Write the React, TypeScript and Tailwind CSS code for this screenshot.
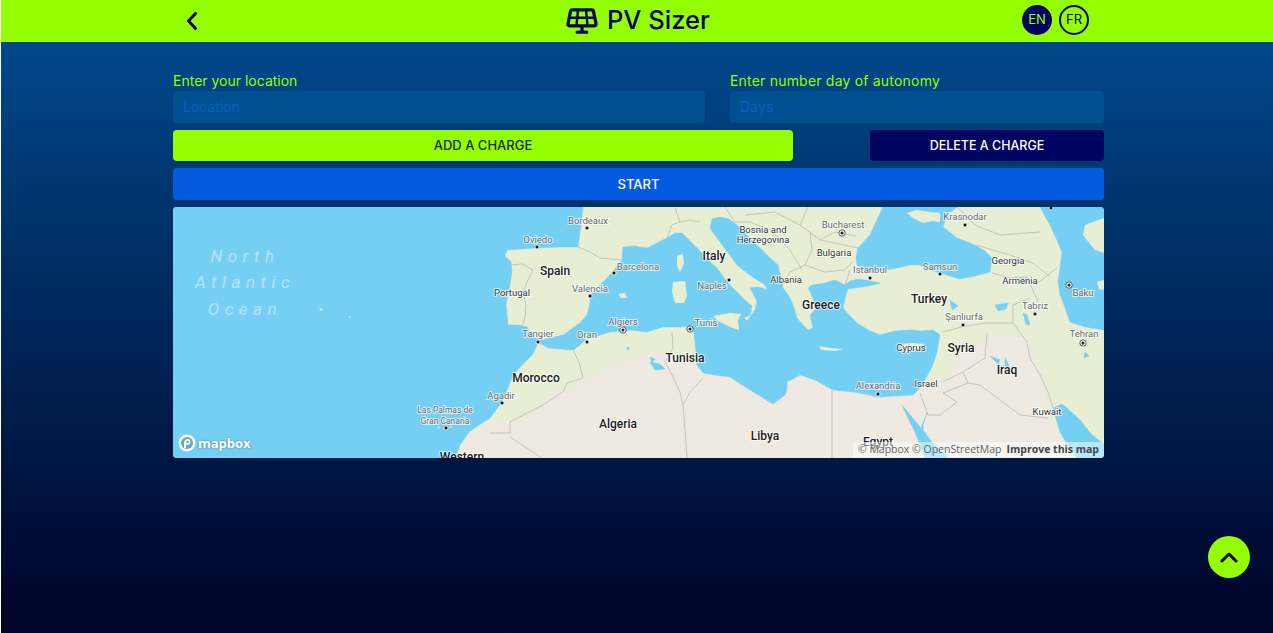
import React from "react";
import { FaSolarPanel } from "react-icons/fa6";

// map drawing uses page coordinates, viewBox is the map's box
const SEA =
  "M173 207 L583 207 L581 225 L578 247 L560 247 L535 248 L507 250 L505 256 L511 262 L512 272 L509 290 L506 304 L508 325 L518 325 L527 327 L533 336 L540 340 L550 338 L563 335 L570 330 L580 323 L587 315 L590 303 L590 295 L598 287 L607 278 L616 268 L622 260 L623 247 L635 246 L647 248 L657 243 L667 238 L675 233 L682 233 L690 241 L697 248 L707 259 L717 268 L724 278 L730 285 L739 294 L747 302 L752 306 L750 315 L744 318 L747 321 L755 310 L757 301 L750 288 L758 287 L768 290 L764 284 L757 280 L747 273 L737 265 L729 254 L720 242 L714 234 L710 228 L712 219 L720 217 L729 219 L737 225 L747 235 L757 245 L768 256 L778 265 L781 277 L783 288 L790 298 L793 305 L797 318 L803 325 L808 330 L813 328 L810 315 L817 308 L812 296 L808 288 L812 285 L825 283 L835 280 L845 285 L850 281 L858 279 L870 281 L880 283 L868 286 L848 289 L845 298 L843 308 L850 316 L857 323 L868 330 L880 335 L895 331 L910 330 L922 331 L933 330 L940 335 L938 345 L937 352 L932 367 L922 385 L916 392 L913 395 L895 396 L878 397 L855 392 L833 390 L815 380 L800 375 L787 382 L787 390 L785 395 L773 404 L760 396 L747 388 L730 377 L715 375 L703 373 L697 365 L696 352 L695 342 L693 325 L683 327 L672 327 L663 327 L647 332 L630 330 L610 332 L597 336 L587 338 L580 345 L573 350 L560 349 L548 348 L538 342 L535 350 L532 355 L522 365 L513 375 L507 390 L502 402 L490 418 L479 425 L469 432 L460 445 L455 458 L173 458 Z";
const BLACK_SEA =
  "M883 207 L876 222 L870 235 L858 248 L856 258 L857 265 L865 271 L872 272 L885 270 L897 268 L910 265 L920 265 L930 270 L940 273 L950 276 L960 279 L975 276 L990 272 L992 258 L985 251 L975 245 L957 238 L943 227 L947 215 L957 207 Z";
const CASPIAN =
  "M1040 207 L1050 225 L1056 238 L1062 252 L1060 268 L1058 282 L1060 295 L1063 302 L1070 322 L1085 327 L1104 330 L1104 207 Z";
const RED_SEA =
  "M902 405 L908 418 L915 432 L925 458 L948 458 L932 442 L923 430 L923 425 L927 413 L921 428 L916 422 Z";
const GULF =
  "M1053 408 L1062 404 L1067 408 L1080 420 L1092 435 L1104 444 L1104 458 L1077 458 L1066 442 L1060 432 Z";
const DESERT =
  "M455 458 L469 432 L490 420 L510 422 L540 410 L557 392 L580 382 L610 365 L630 358 L650 352 L667 355 L683 365 L697 365 L720 370 L800 370 L900 372 L925 388 L943 382 L960 355 L975 345 L987 335 L1027 338 L1036 360 L1040 372 L1050 412 L1055 428 L1075 458 Z";
const LANDS = [
  "M677 256 L683 254 L684 264 L680 272 L677 266 Z", // corsica
  "M673 282 L685 281 L687 296 L684 303 L675 303 L672 292 Z", // sardinia
  "M713 316 L730 313 L741 314 L738 321 L739 330 L730 327 L718 321 Z", // sicily
  "M618 294 L625 293 L627 298 L621 298 Z",
  "M818 346 L830 348 L843 349 L835 351 L822 350 Z", // crete
  "M897 344 L912 343 L925 344 L917 349 L906 352 Z", // cyprus
  "M907 213 L917 210 L930 212 L940 213 L940 222 L932 221 L923 223 L913 218 Z", // crimea
  "M1104 218 L1085 225 L1083 235 L1095 250 L1104 253 Z",
  "M1097 282 L1104 280 L1104 290 L1099 289 Z",
  "M437 427 L440 426 L439 429 Z",
  "M449 427 L452 426 L451 428 Z",
  "M319 308 L323 309 L321 311 Z",
  "M349 316 L352 317 L349 318 Z",
];
const LAKES = [
  "M995 305 L1008 303 L1006 309 L998 311 Z",
  "M1023 313 L1027 315 L1030 325 L1026 324 Z",
  "M1020 278 L1029 279 L1027 283 L1022 282 Z",
  "M950 300 L958 306 L952 310 Z",
  "M1085 352 L1089 356 L1084 358 Z",
  "M990 356 L1000 360 L998 364 Z",
  "M1005 357 L1010 368 L1005 368 Z",
  "M650 362 L660 364 L665 369 L655 370 Z",
  "M650 357 L655 359 L652 363 Z",
  "M627 347 L630 348 L627 350 Z",
];
const BORDERS = [
  "578,247 590,252 600,258 622,260",
  "510,265 522,264 533,270 527,282 523,292 526,305 525,318 522,325",
  "573,350 579,362 583,378 567,383 563,392 558,395 543,405 525,414 510,422 510,433 490,433",
  "510,437 525,447 542,458",
  "672,332 673,348 665,362 672,375 680,392 683,405 685,430 687,458",
  "703,378 690,392 683,405",
  "832,390 832,458",
  "943,332 965,326 987,323 1013,323",
  "987,333 985,358 963,372 943,382",
  "963,372 968,383 980,385 1000,400 1020,415 1048,418",
  "968,383 943,393 957,402 940,415 928,415",
  "920,393 928,415",
  "1013,305 1013,323 1027,342 1030,358 1040,375 1048,392 1053,408",
  "977,245 993,250 1010,255 1033,263 1050,277",
  "992,273 1010,278 1027,277 1038,302",
  "1027,277 1035,285 1057,268",
  "1013,305 1030,298",
  "667,238 672,225 680,222 690,220 700,222",
  "680,222 675,208",
  "725,207 735,222 750,222 770,230 790,250 802,270",
  "745,215 775,212 800,225 820,240 858,248",
  "810,232 812,250 805,265 790,272 782,285",
  "805,265 825,272 845,270 852,262",
  "800,225 808,207",
  "820,240 835,232 856,236",
  "845,285 850,270",
  "957,207 975,225 1000,235 1040,232",
];
const CITIES = [
  [587, 228], [537, 247], [614, 273], [590, 296], [587, 342], [538, 342], [502, 403], [729, 280],
  [870, 278], [940, 274], [965, 225], [1035, 314], [963, 325], [878, 394], [446, 428], [1051, 208],
];
const CAPITALS = [[623, 330], [690, 329], [842, 233], [1069, 285], [1083, 343]];

type Label = [string, number, number];
const COUNTRY: Label[] = [
  ["Spain", 555, 275], ["Italy", 714, 260], ["Morocco", 536, 382], ["Tunisia", 685, 362], ["Algeria", 618, 428],
  ["Libya", 765, 440], ["Turkey", 929, 303], ["Greece", 821, 309], ["Syria", 961, 352], ["Iraq", 1007, 374], ["Egypt", 878, 446],
  ["Western", 462, 461],
];
const SMALL_DARK: Label[] = [
  ["Portugal", 512, 296], ["Bosnia and", 763, 233], ["Herzegovina", 763, 243], ["Albania", 786, 283], ["Bulgaria", 834, 256],
  ["Georgia", 1008, 264], ["Armenia", 1020, 284], ["Cyprus", 911, 351], ["Israel", 926, 387], ["Kuwait", 1047, 415],
];
const CITY_NAMES: Label[] = [
  ["Bordeaux", 588, 224], ["Oviedo", 538, 243], ["Barcelona", 638, 270], ["Valencia", 590, 292], ["Algiers", 623, 325],
  ["Tunis", 706, 326], ["Oran", 587, 338], ["Tangier", 538, 337], ["Agadir", 501, 399], ["Naples", 712, 289],
  ["Bucharest", 843, 228], ["Istanbul", 870, 273], ["Samsun", 940, 270], ["Krasnodar", 965, 220], ["Baku", 1083, 296],
  ["Tabriz", 1035, 309], ["Şanlıurfa", 964, 320], ["Tehran", 1084, 337], ["Alexandria", 878, 389],
];
const PALMAS: Label[] = [["Las Palmas de", 445, 413], ["Gran Canaria", 445, 424]];
const OCEAN: Label[] = [["North", 245, 262], ["Atlantic", 245, 288], ["Ocean", 245, 315]];

function MapDrawing() {
  return (
    <svg viewBox="173 207 931 251" className="block h-full w-full [font-family:Roboto,sans-serif]">
      <rect x="173" y="207" width="931" height="251" fill="#e8eed4" />
      <path d={DESERT} fill="#efe9e1" />
      {BORDERS.map((b) => (
        <polyline key={b} points={b} fill="none" stroke="#b5b2ae" strokeWidth="0.7" />
      ))}
      <g fill="#75cff2" stroke="#75cff2" strokeWidth="0.5" strokeLinejoin="round">
        <path d={SEA} />
        <path d={BLACK_SEA} />
        <path d={CASPIAN} />
        <path d={RED_SEA} />
        <path d={GULF} />
        {LAKES.map((d) => (
          <path key={d} d={d} />
        ))}
      </g>
      {LANDS.map((d) => (
        <path key={d} d={d} fill="#e8eed4" />
      ))}
      {OCEAN.map(([t, x, y]) => (
        <text key={t} x={x} y={y} textAnchor="middle" fontSize="17" fontStyle="italic" letterSpacing="5.5" fill="#b8e4f7">
          {t}
        </text>
      ))}
      {CITIES.map(([x, y]) => (
        <circle key={x + "-" + y} cx={x} cy={y} r="2" fill="#111" stroke="#fff" strokeWidth="0.8" />
      ))}
      {CAPITALS.map(([x, y]) => (
        <g key={x + "-" + y}>
          <circle cx={x} cy={y} r="3.2" fill="#fff" stroke="#333" strokeWidth="0.8" />
          <circle cx={x} cy={y} r="1.5" fill="#222" />
        </g>
      ))}
      {COUNTRY.map(([t, x, y]) => (
        <text key={t} x={x} y={y} textAnchor="middle" fontSize="12" fontWeight="500" fill="#1d2024" stroke="#fff" strokeOpacity="0.7" strokeWidth="2" paintOrder="stroke">
          {t}
        </text>
      ))}
      {SMALL_DARK.map(([t, x, y]) => (
        <text key={t} x={x} y={y} textAnchor="middle" fontSize="9.5" fill="#33373c" stroke="#fff" strokeOpacity="0.7" strokeWidth="2" paintOrder="stroke">
          {t}
        </text>
      ))}
      {CITY_NAMES.map(([t, x, y]) => (
        <text key={t} x={x} y={y} textAnchor="middle" fontSize="9.5" fill="#666b6f" stroke="#fff" strokeOpacity="0.7" strokeWidth="2" paintOrder="stroke">
          {t}
        </text>
      ))}
      {PALMAS.map(([t, x, y]) => (
        <text key={t} x={x} y={y} textAnchor="middle" fontSize="8.5" fill="#666b6f" stroke="#fff" strokeOpacity="0.7" strokeWidth="2" paintOrder="stroke">
          {t}
        </text>
      ))}
    </svg>
  );
}

export default function App() {
  return (
    <div className="relative flex h-[633px] flex-col overflow-hidden border-l border-white bg-gradient-to-b from-[#004e92] to-[#000428] [font-family:Inter,sans-serif]">
      {/* Header */}
      <header className="flex h-[42px] shrink-0 items-center bg-[#95ff00] text-[#000461]">
        <div className="flex w-[565px] pl-[185px]">
          <svg width="12" height="18" viewBox="0 0 12 18" fill="none" stroke="currentColor" strokeWidth="3" strokeLinecap="round" strokeLinejoin="round">
            <path d="M9.5 1.5 2.5 9l7 7.5" />
          </svg>
        </div>
        <FaSolarPanel className="text-[32px]" />
        <h1 className="ml-[9px] w-[415px] pb-[2px] text-[25.5px] font-medium">PV Sizer</h1>
        <div className="flex gap-[7px] pb-[2px]">
          <span className="flex h-[30px] w-[30px] items-center justify-center rounded-full border-2 border-[#000461] bg-[#000461] text-[13px] text-[#95ff00]">EN</span>
          <span className="flex h-[30px] w-[30px] items-center justify-center rounded-full border-2 border-[#000461] text-[13px]">FR</span>
        </div>
      </header>

      {/* Form */}
      <main className="ml-[172px] w-[931px] pt-[29px]">
        <div className="flex gap-[25px]">
          <label className="block w-[532px] text-sm leading-5 text-[#95ff00]">
            Enter your location
            <input placeholder="Location" className="block h-8 w-full rounded bg-[#004f90] px-2.5 pb-[2px] text-sm outline-none placeholder:text-[#0560c4]" />
          </label>
          <label className="block flex-1 text-sm leading-5 tracking-[0.2px] text-[#95ff00]">
            Enter number day of autonomy
            <input placeholder="Days" className="block h-8 w-full rounded bg-[#004f90] px-2.5 pb-[2px] text-sm outline-none placeholder:text-[#0560c4]" />
          </label>
        </div>
        <div className="mt-[7px] flex justify-between">
          <button className="h-[31px] w-[620px] rounded bg-[#95ff00] text-[13px] font-medium text-[#1c2b12]">ADD A CHARGE</button>
          <button className="h-[31px] w-[234px] rounded bg-[#000461] pt-px text-[12.5px] font-medium text-white">DELETE A CHARGE</button>
        </div>
        <button className="mt-[7px] block h-8 w-full rounded bg-[#055be0] pt-px text-[13px] font-medium text-white">START</button>
        <div className="relative mt-[7px] h-[251px] overflow-hidden rounded">
          <MapDrawing />
          <div className="absolute bottom-[6px] left-[5px] flex items-center gap-[2px] text-white">
            <svg width="18" height="18" viewBox="0 0 18 18">
              <circle cx="9" cy="9" r="8.5" fill="#fff" />
              <circle cx="9" cy="9" r="6" fill="#5fa8c4" />
              <circle cx="9.5" cy="8" r="3" fill="#fff" />
              <path d="M6 14V8h2v6z" fill="#fff" />
              <circle cx="9.5" cy="8" r="1.2" fill="#5fa8c4" />
            </svg>
            <span className="text-[13px] leading-none font-bold [text-shadow:0_0_2px_#3a7a96] [font-family:'Open_Sans',sans-serif]">mapbox</span>
          </div>
          <div className="absolute right-0 bottom-0 flex h-4 items-center gap-[5px] bg-white/50 px-[5px] text-[10.5px] text-[#5c6469] [font-family:'Open_Sans',sans-serif]">
            <span>© Mapbox © OpenStreetMap</span>
            <span className="font-bold text-[#40464a]">Improve this map</span>
          </div>
        </div>
      </main>

      {/* Scroll to top */}
      <button className="absolute top-[536px] left-[1207px] flex h-[42px] w-[42px] items-center justify-center rounded-full bg-[#95ff00] text-[#000428]">
        <svg width="18" height="12" viewBox="0 0 18 12" fill="none" stroke="currentColor" strokeWidth="3" strokeLinecap="round" strokeLinejoin="round">
          <path d="M2 10 9 3l7 7" />
        </svg>
      </button>
    </div>
  );
}
